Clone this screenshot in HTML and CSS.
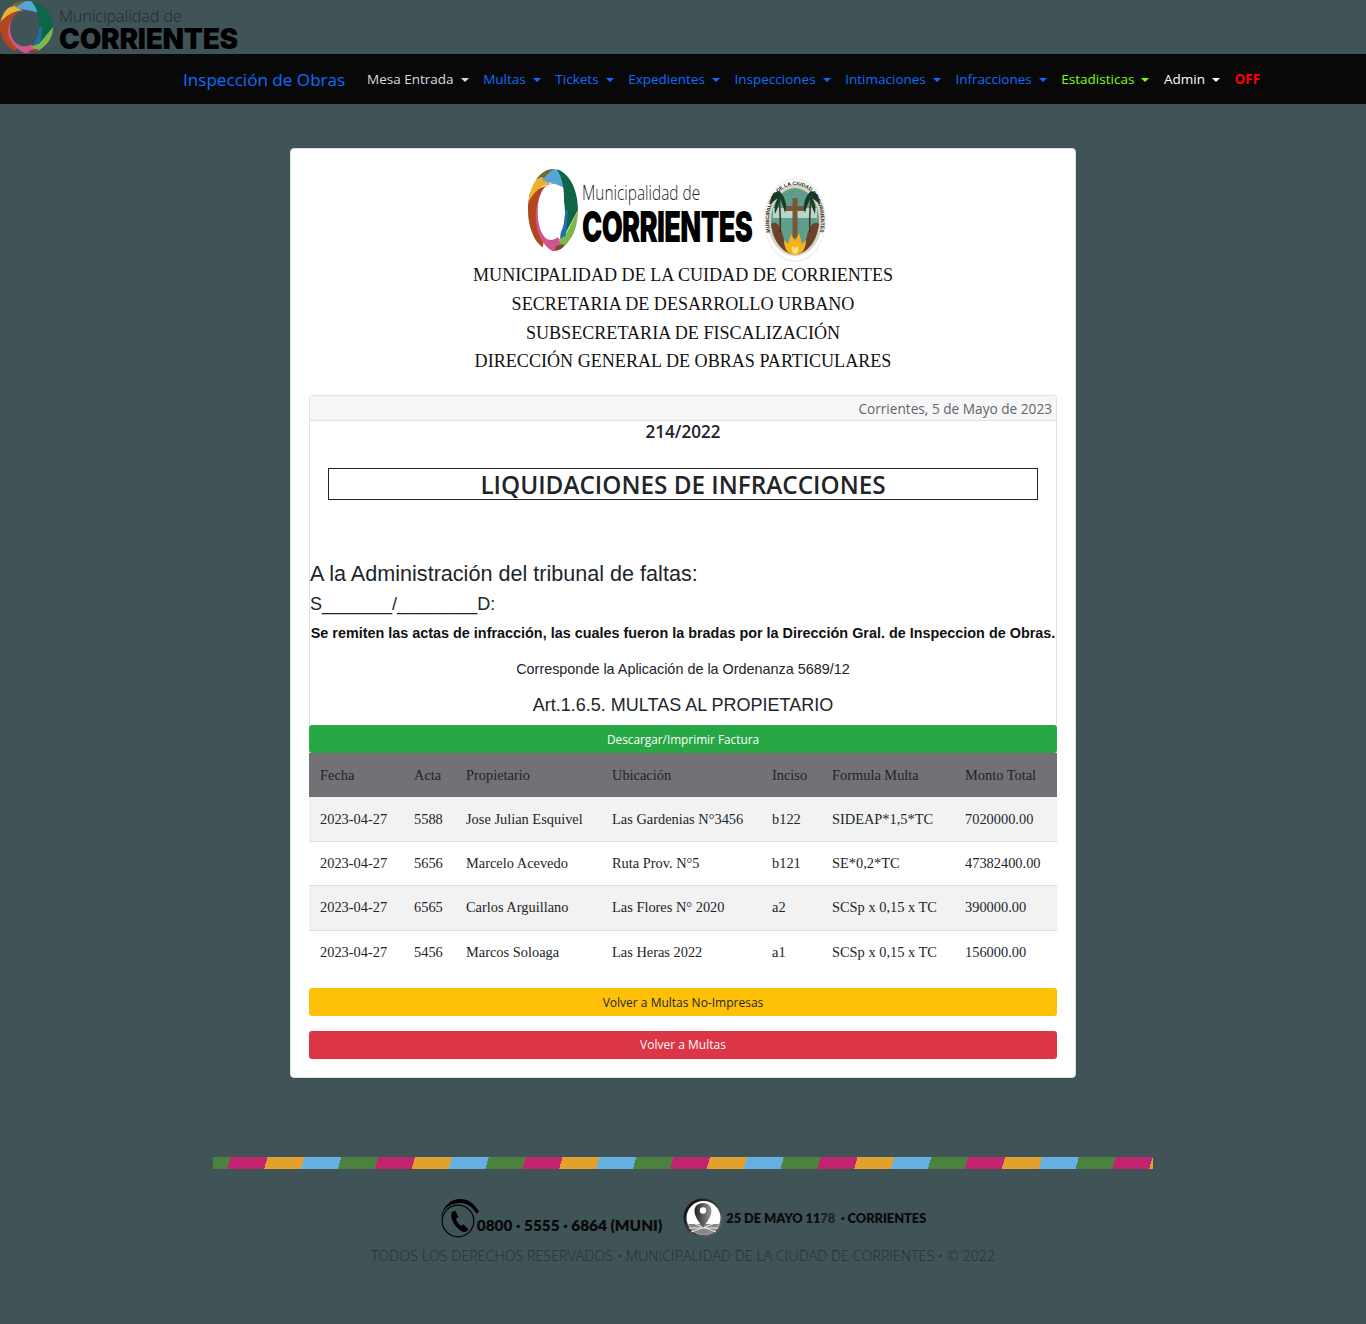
FILE: index.html
```html
<!DOCTYPE html>
<html lang="es">
<head>
    <meta charset="UTF-8">
    <meta name="viewport" content="width=device-width, initial-scale=1.0">
    <title>Inspección de Obras</title>
    <link rel="stylesheet" href="styles.css">
</head>
<body>
    <svg class="svg-defs" width="0" height="0">
        <defs>
            <clipPath id="ringClip">
                <path clip-rule="evenodd" d="M25 1C39 1 50 19 50 42C50 65 39 83 25 83C11 83 0 65 0 42C0 19 11 1 25 1ZM24 16C15 16 9.500 29 9.500 44C9.500 60 15 72 23 72C31 72 37 60 37 44C37 29 32 16 24 16Z"/>
            </clipPath>
        </defs>
        <symbol id="ring" viewBox="0 0 50 84" preserveAspectRatio="none">
            <g clip-path="url(#ringClip)">
                <path fill="#b2461f" d="M0 25L25 15L14 84H0Z"/>
                <path fill="#d2548f" d="M22 14C10 24 5 44 9 60C12 72 18 80 26 84L38 76L30 70L12 40Z"/>
                <path fill="#e9b22f" d="M0 31L4 14L14 9L21 16C12 18 6 24 0 35Z"/>
                <path fill="#6f6c35" d="M5 13L14 3L30 -1L18 8L21 16L14 9Z"/>
                <path fill="#56a5d4" d="M14 12L24 2L32 0L41 22L30 17Z"/>
                <path fill="#0e6646" d="M28 0H50V42L36 68L36 30C36 20 34 8 28 0Z"/>
                <path fill="#1f6fae" d="M35 42L40 42L38 68L32 71Z"/>
                <path fill="#7db84a" d="M50 42V60L36 80L30 72L37 68Z"/>
                <path fill="#7a4a2a" d="M28 78L36 76L34 84H26Z"/>
            </g>
        </symbol>
        <symbol id="seal" viewBox="0 0 62 84">
            <defs>
                <path id="sealText" d="M7 60C0 30 12 7 31 7C50 7 62 30 55 60"/>
            </defs>
            <ellipse cx="31" cy="42" rx="31" ry="42" fill="#eeeeea"/>
            <ellipse cx="31" cy="42" rx="30" ry="40.500" fill="#fff"/>
            <ellipse cx="31" cy="42" rx="27.500" ry="36" fill="#d8d4c0"/>
            <ellipse cx="31" cy="43" rx="24" ry="33" fill="#5f9d8c"/>
            <path fill="#b9d6cd" d="M9 30H53V40H9Z"/>
            <path fill="#6d412a" d="M7 46C12 42 17 48 19 58C21 66 24 71 28 76C18 74 9 62 7 46Z"/>
            <path fill="#6d412a" d="M55 46C50 42 45 48 43 58C41 66 38 71 34 76C44 74 53 62 55 46Z"/>
            <path fill="#7a5638" d="M28.500 20H33.500V28H41V33H33.500V60H28.500V33H21V28H28.500Z"/>
            <path fill="#f5b21a" d="M31 77C23 76 20 70 20 62L24 66L27 56L31 63L35 55L38 66L42 62C42 70 39 76 31 77Z"/>
            <path fill="#fbe37a" d="M31 76C28 75 27 72 28 68L31 70L34 68C35 72 34 75 31 76Z"/>
            <path fill="none" stroke="#4a3522" stroke-width="1.600" d="M15 18C16 30 17 42 16 54M47 18C46 30 45 42 46 54"/>
            <path fill="#173f28" d="M15 13C9 14 6 19 6 27C10 22 13 21 14 21C11 24 10 30 11 36C14 30 15 25 16 21C18 26 20 30 21 35C24 28 21 18 15 13Z"/>
            <path fill="#173f28" d="M47 13C53 14 56 19 56 27C52 22 49 21 48 21C51 24 52 30 51 36C48 30 47 25 46 21C44 26 42 30 41 35C38 28 41 18 47 13Z"/>
            <text class="seal-text"><textPath href="#sealText" startOffset="50%" text-anchor="middle" textLength="122" lengthAdjust="spacingAndGlyphs">MUNICIPALIDAD DE LA CIUDAD DE CORRIENTES</textPath></text>
        </symbol>
    </svg>

    <header class="top-logo">
        <div class="logo logo-small">
            <svg class="logo-ring"><use href="#ring"/></svg>
            <div class="logo-words">
                <span class="logo-thin">Municipalidad de</span>
                <span class="logo-bold">CORRIENTES</span>
            </div>
        </div>
    </header>

    <nav class="navbar">
        <a class="brand">Inspección de Obras</a>
        <ul class="nav-list">
            <li class="nav-item light caret">Mesa Entrada</li>
            <li class="nav-item caret">Multas</li>
            <li class="nav-item caret">Tickets</li>
            <li class="nav-item caret">Expedientes</li>
            <li class="nav-item caret">Inspecciones</li>
            <li class="nav-item caret">Intimaciones</li>
            <li class="nav-item caret">Infracciones</li>
            <li class="nav-item lime caret">Estadisticas</li>
            <li class="nav-item white caret">Admin</li>
            <li class="nav-item off">OFF</li>
        </ul>
    </nav>

    <main class="page">
        <section class="sheet">
            <div class="letterhead">
                <div class="letterhead-logos">
                    <div class="logo logo-large">
                        <svg class="logo-ring"><use href="#ring"/></svg>
                        <div class="logo-words">
                            <span class="logo-thin">Municipalidad de</span>
                            <span class="logo-bold">CORRIENTES</span>
                        </div>
                    </div>
                    <svg class="seal"><use href="#seal"/></svg>
                </div>
                <p>MUNICIPALIDAD DE LA CUIDAD DE CORRIENTES</p>
                <p>SECRETARIA DE DESARROLLO URBANO</p>
                <p>SUBSECRETARIA DE FISCALIZACIÓN</p>
                <p>DIRECCIÓN GENERAL DE OBRAS PARTICULARES</p>
            </div>

            <div class="doc-card">
                <div class="doc-date">Corrientes, 5 de Mayo de 2023</div>
                <div class="doc-number">214/2022</div>
                <h1 class="doc-title">LIQUIDACIONES DE INFRACCIONES</h1>
                <h2 class="doc-to">A la Administración del tribunal de faltas:</h2>
                <p class="doc-sd">S_______/________D:</p>
                <p class="doc-bold">Se remiten las actas de infracción, las cuales fueron la bradas por la Dirección Gral. de Inspeccion de Obras.</p>
                <p class="doc-ord">Corresponde la Aplicación de la Ordenanza 5689/12</p>
                <p class="doc-art">Art.1.6.5. MULTAS AL PROPIETARIO</p>
            </div>

            <a class="btn btn-green">Descargar/Imprimir Factura</a>

            <table class="fines">
                <colgroup>
                    <col class="c-fecha"><col class="c-acta"><col class="c-prop"><col class="c-ubic"><col class="c-inciso"><col class="c-formula"><col class="c-monto">
                </colgroup>
                <thead>
                    <tr><th>Fecha</th><th>Acta</th><th>Propietario</th><th>Ubicación</th><th>Inciso</th><th>Formula Multa</th><th>Monto Total</th></tr>
                </thead>
                <tbody>
                    <tr><td>2023-04-27</td><td>5588</td><td>Jose Julian Esquivel</td><td>Las Gardenias N°3456</td><td>b122</td><td>SIDEAP*1,5*TC</td><td>7020000.00</td></tr>
                    <tr><td>2023-04-27</td><td>5656</td><td>Marcelo Acevedo</td><td>Ruta Prov. N°5</td><td>b121</td><td>SE*0,2*TC</td><td>47382400.00</td></tr>
                    <tr><td>2023-04-27</td><td>6565</td><td>Carlos Arguillano</td><td>Las Flores N° 2020</td><td>a2</td><td>SCSp x 0,15 x TC</td><td>390000.00</td></tr>
                    <tr><td>2023-04-27</td><td>5456</td><td>Marcos Soloaga</td><td>Las Heras 2022</td><td>a1</td><td>SCSp x 0,15 x TC</td><td>156000.00</td></tr>
                </tbody>
            </table>

            <a class="btn btn-yellow">Volver a Multas No-Impresas</a>
            <a class="btn btn-red">Volver a Multas</a>
        </section>
    </main>

    <footer class="footer">
        <div class="stripe"></div>
        <div class="contact">
            <div class="contact-item phone">
                <svg class="phone-icon" viewBox="0 0 40 40">
                    <circle cx="18" cy="22.500" r="15.800" fill="none" stroke="#000" stroke-width="1.200"/>
                    <path fill="none" stroke="#000" stroke-width="0.800" d="M1.500 18C3 9 10 3 18 2.500"/>
                    <path fill="#000" d="M3 13C6 5 13 0 21 .5C29 1 34 5 39 13L36.500 15C32 8 27 4.500 20 4.500C12 4.500 7 8 3 13Z"/>
                    <path fill="#000" d="M12 13.500L15 12L18.500 18.500L16 20.300C16.500 23 18.500 25.800 21 27.500L23.500 25.800L28.500 31L26.500 33C24 34.500 20 32.500 16.500 28.500C12.500 24 10 18 12 13.500Z"/>
                </svg>
                <span>0800 · 5555 · 6864 (MUNI)</span>
            </div>
            <div class="contact-item address">
                <svg class="pin-icon" viewBox="0 0 40 40">
                    <defs>
                        <linearGradient id="pinRim" x1="0" y1="0" x2="1" y2="1">
                            <stop offset="0" stop-color="#000"/>
                            <stop offset="1" stop-color="#777"/>
                        </linearGradient>
                        <linearGradient id="pinBody" x1="0" y1="0" x2="1" y2="0">
                            <stop offset="0" stop-color="#222"/>
                            <stop offset="1" stop-color="#999"/>
                        </linearGradient>
                    </defs>
                    <circle cx="20" cy="20" r="19.500" fill="url(#pinRim)"/>
                    <circle cx="20.500" cy="20" r="17" fill="#fff"/>
                    <path fill="#888" d="M5 26H36C33 33 27 37 20.500 37C14 37 8 33 5 26Z"/>
                    <path fill="none" stroke="#eee" stroke-width="1" d="M8 34L30 26M33 34L12 26M6 30H35"/>
                    <path fill="url(#pinBody)" d="M20 5C14 5 11.500 9 11.500 13C11.500 19 17 25 20 30C23 25 28.500 19 28.500 13C28.500 9 26 5 20 5Z"/>
                    <circle cx="20" cy="12.500" r="3.200" fill="#fff"/>
                </svg>
                <span>25 DE MAYO 11<em>78</em> &nbsp;· CORRIENTES</span>
            </div>
        </div>
        <p class="copyright">TODOS LOS DERECHOS RESERVADOS • MUNICIPALIDAD DE LA CIUDAD DE CORRIENTES • © 2022</p>
    </footer>
</body>
</html>
```

FILE: styles.css
```css
* {
    box-sizing: border-box;
}
body {
    margin: 0;
    background-color: #405357;
    font-family: "Open Sans", sans-serif;
    color: #212529;
}
.svg-defs {
    position: absolute;
}
p {
    margin: 0;
}

/* logo */
.logo {
    display: flex;
    align-items: center;
}
.logo-words {
    display: flex;
    flex-direction: column;
    text-align: left;
    color: #000;
}
.logo-thin {
    font-family: "Open Sans", sans-serif;
    font-weight: 300;
    white-space: nowrap;
}
.logo-bold {
    font-family: "Inter", sans-serif;
    font-weight: 900;
    white-space: nowrap;
}
.logo-small .logo-ring {
    width: 53px;
    height: 54px;
}
.logo-small .logo-words {
    margin-left: 6px;
    padding-top: 7px;
}
.logo-small .logo-thin {
    font-size: 16px;
    line-height: 17px;
    color: #1f2a2c;
}
.logo-small .logo-bold {
    font-size: 28px;
    line-height: 28px;
    letter-spacing: -0.3px;
}
.logo-large .logo-ring {
    width: 50px;
    height: 84px;
}
.logo-large .logo-words {
    width: 171px;
    margin-left: 4px;
    padding-top: 9px;
}
.logo-large .logo-thin {
    font-size: 20px;
    line-height: 25px;
    color: #222;
    transform: scaleX(0.77);
    transform-origin: left;
}
.logo-large .logo-bold {
    font-size: 42px;
    line-height: 44px;
    letter-spacing: -1px;
    transform: scaleX(0.647);
    transform-origin: left;
}

/* header and nav */
.top-logo {
    height: 54px;
}
.navbar {
    display: flex;
    align-items: center;
    height: 50px;
    padding-left: 183px;
    background-color: #080808;
}
.brand {
    margin-right: 14.500px;
    font-size: 17.100px;
    color: #0d6efd;
}
.nav-list {
    display: flex;
    align-items: center;
    margin: 0;
    padding: 0;
    list-style: none;
}
.nav-item {
    padding: 0 7.300px;
    font-size: 13.500px;
    color: #0d6efd;
}
.nav-item.light {
    color: #d5dde0;
}
.nav-item.lime {
    color: #7fff00;
}
.nav-item.white {
    color: #fff;
}
.nav-item.off {
    font-weight: 700;
    color: #f00;
}
.caret::after {
    content: "";
    display: inline-block;
    margin-left: 7px;
    vertical-align: 2px;
    border-top: 4px solid currentColor;
    border-left: 4px solid transparent;
    border-right: 4px solid transparent;
}

/* sheet */
.page {
    display: flex;
    justify-content: center;
    padding-top: 44px;
}
.sheet {
    width: 786px;
    height: 930px;
    padding: 19px 18px 0;
    background-color: #fff;
    border: 1px solid #dfe1e3;
    border-radius: 4px;
}
.letterhead {
    text-align: center;
    font-family: "Liberation Serif", serif;
    font-size: 18.100px;
    line-height: 28.800px;
    color: #111;
}
.letterhead-logos {
    display: flex;
    justify-content: center;
    align-items: flex-start;
    height: 93px;
    padding-right: 12px;
}
.seal {
    width: 62px;
    height: 84px;
    margin: 10px 0 0 11px;
}
.seal-text {
    font-family: "Liberation Sans", sans-serif;
    font-size: 5px;
    font-weight: 700;
    fill: #222;
}

/* document card */
.doc-card {
    height: 330px;
    margin-top: 19px;
    text-align: center;
    border: 1px solid #dfe1e3;
    border-bottom: 0;
    border-radius: 4px 4px 0 0;
}
.doc-date {
    height: 25px;
    padding: 2px 4px 0 0;
    text-align: right;
    font-size: 13.650px;
    line-height: 21px;
    color: #5f666c;
    background-color: #f7f7f7;
    border-bottom: 1px solid #dfe1e3;
}
.doc-number {
    height: 22px;
    font-size: 17.100px;
    font-weight: 600;
    line-height: 22px;
}
.doc-title {
    height: 32px;
    margin: 25px 18px 0;
    font-size: 24.300px;
    font-weight: 600;
    line-height: 32px;
    border: 1px solid #212529;
}
.doc-to {
    margin: 60px 0 0;
    text-align: left;
    font-family: "Liberation Sans", sans-serif;
    font-size: 21.600px;
    font-weight: 400;
    line-height: 28px;
}
.doc-sd {
    margin-top: 3px;
    text-align: left;
    font-family: "Liberation Sans", sans-serif;
    font-size: 18px;
    line-height: 27px;
}
.doc-bold {
    margin-top: 3px;
    white-space: nowrap;
    font-family: "Liberation Sans", sans-serif;
    font-size: 14.400px;
    font-weight: 700;
    line-height: 24px;
    color: #111;
}
.doc-ord {
    margin-top: 12px;
    font-family: "Liberation Sans", sans-serif;
    font-size: 14.400px;
    line-height: 24px;
}
.doc-art {
    margin-top: 11px;
    font-family: "Liberation Sans", sans-serif;
    font-size: 18px;
    line-height: 27px;
}

/* buttons */
.btn {
    display: block;
    height: 28px;
    text-align: center;
    font-size: 12px;
    line-height: 28px;
    border-radius: 3px;
}
.btn-green {
    font-size: 11.800px;
    line-height: 29px;
    color: #fff;
    background-color: #28a745;
}
.btn-yellow {
    margin-top: 13px;
    line-height: 29px;
    color: #212529;
    background-color: #ffc107;
}
.btn-red {
    margin-top: 15px;
    color: #fff;
    background-color: #dc3545;
}

/* table */
.fines {
    width: 748px;
    table-layout: fixed;
    border-collapse: collapse;
    font-family: "Liberation Serif", serif;
    font-size: 14.400px;
    line-height: 21.600px;
}
.c-fecha { width: 94px; }
.c-acta { width: 52px; }
.c-prop { width: 146px; }
.c-ubic { width: 160px; }
.c-inciso { width: 60px; }
.c-formula { width: 133px; }
.c-monto { width: 103px; }
.fines th {
    height: 44px;
    padding: 1px 0 0 11px;
    text-align: left;
    font-weight: 400;
    color: #212529;
    background-color: #737175;
}
.fines td {
    height: 44.400px;
    padding: 0 0 0 11px;
    white-space: nowrap;
    color: #212529;
    border-bottom: 1px solid #dee2e6;
}
.fines tbody tr:first-child td {
    padding-top: 1px;
}
.fines tbody tr:nth-child(odd) td {
    background-color: #f2f2f2;
}
.fines tbody tr:last-child td {
    border-bottom: 0;
}

/* footer */
.footer {
    margin-top: 79px;
    text-align: center;
}
.stripe {
    width: 940px;
    height: 12px;
    margin: 0 auto;
    background-image: repeating-linear-gradient(106deg,
        #4c8240 -18.500px 17px,
        #c2246f 17px 52.450px,
        #e2a02c 52.450px 87.900px,
        #67aee3 87.900px 123.300px);
}
.contact {
    display: flex;
    justify-content: center;
    align-items: flex-start;
    margin-top: 29px;
}
.contact-item {
    display: flex;
    color: #0a0a0a;
    font-family: "Lato", sans-serif;
    font-weight: 800;
    white-space: nowrap;
}
.phone {
    align-items: flex-end;
    font-size: 15.400px;
    line-height: 28px;
}
.phone-icon {
    width: 40px;
    height: 41px;
}
.phone span {
    margin-left: -3px;
}
.address {
    align-items: center;
    margin-left: 21px;
    font-size: 12.750px;
}
.address em {
    font-style: normal;
    color: #1c2628;
}
.pin-icon {
    width: 40px;
    height: 40px;
}
.address span {
    margin: 0 0 0 3px;
}
.copyright {
    margin-top: 6px;
    font-size: 14.250px;
    font-weight: 300;
    line-height: 21px;
    color: #282f31;
}
```
